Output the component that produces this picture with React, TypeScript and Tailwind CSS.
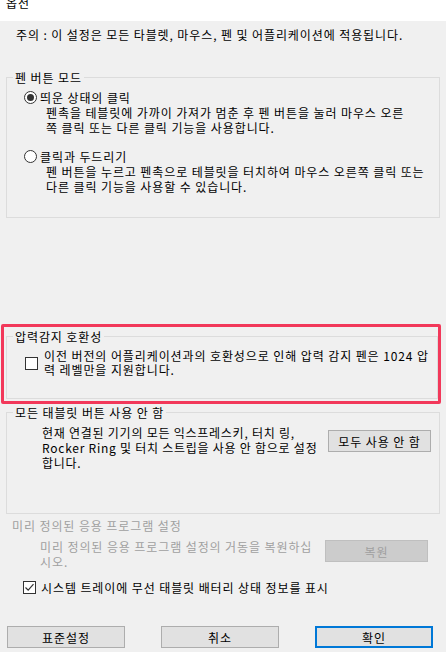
import React from "react";

function Radio({ checked }: { checked?: boolean }) {
  return (
    <span className="flex h-[13px] w-[13px] shrink-0 items-center justify-center rounded-full border border-[#333333] bg-white">
      {checked && <span className="h-[7px] w-[7px] rounded-full bg-[#333333]" />}
    </span>
  );
}

function Check({ checked }: { checked?: boolean }) {
  return (
    <span className="flex h-[13px] w-[13px] shrink-0 items-center justify-center border border-[#333333] bg-white">
      {checked && (
        <svg width="11" height="11" viewBox="0 0 11 11">
          <path d="M1.5 5.5 L4.2 8.2 L9.5 2.2" fill="none" stroke="#333333" strokeWidth="1.2" />
        </svg>
      )}
    </span>
  );
}

function Button({ label, className = "", disabled, primary }: { label: string; className?: string; disabled?: boolean; primary?: boolean }) {
  const tone = disabled
    ? "border border-[#bfbfbf] bg-[#cccccc] text-[#a0a0a0]"
    : primary
      ? "border-2 border-[#0078d7] bg-[#e1e1e1] text-black"
      : "border border-[#adadad] bg-[#e1e1e1] text-black";
  return (
    <button type="button" className={`flex h-[22px] shrink-0 items-center justify-center ${tone} ${className}`}>
      {label}
    </button>
  );
}

export default function App() {
  return (
    <div className="h-[652px] w-[446px] overflow-hidden whitespace-nowrap bg-[#f0f0f0] font-['Noto_Sans_CJK_KR','Noto_Sans',sans-serif] text-[12px] leading-[15px] tracking-[0.9px] text-black">
      <div className="h-[21px] overflow-hidden bg-white px-[6px]">
        <div className="-mt-[5px]">옵션</div>
      </div>

      <p className="mt-[6px] pl-[16px]">주의 : 이 설정은 모든 타블렛, 마우스, 펜 및 어플리케이션에 적용됩니다.</p>

      <fieldset className="mx-[6px] mt-[28px] h-[148px] border border-[#dcdcdc]">
        <legend className="ml-[6px] px-[2px]">펜 버튼 모드</legend>
        <div className="mt-[5px] pl-[17px]">
          <div className="flex items-center gap-[3px]">
            <Radio checked />
            <span>띄운 상태의 클릭</span>
          </div>
          <p className="pl-[22px]">
            펜촉을 테블릿에 가까이 가져가 멈춘 후 펜 버튼을 눌러 마우스 오른
            <br />
            쪽 클릭 또는 다른 클릭 기능을 사용합니다.
          </p>
          <div className="mt-[14px] flex items-center gap-[3px]">
            <Radio />
            <span>클릭과 두드리기</span>
          </div>
          <p className="pl-[22px]">
            펜 버튼을 누르고 펜촉으로 테블릿을 터치하여 마우스 오른쪽 클릭 또는
            <br />
            다른 클릭 기능을 사용할 수 있습니다.
          </p>
        </div>
      </fieldset>

      <div className="ml-[1px] mt-[106px] h-[80px] w-[440px] overflow-hidden rounded-[2px] border-[3px] border-[#f2385a]">
        <fieldset className="ml-[2px] mt-[2px] h-[70px] border border-[#dcdcdc]">
          <legend className="ml-[6px] px-[2px]">압력감지 호환성</legend>
          <div className="mt-[5px] flex items-center gap-[6px] pl-[18px]">
            <Check />
            <p className="leading-[14px]">
              이전 버전의 어플리케이션과의 호환성으로 인해 압력 감지 펜은 1024 압
              <br />
              력 레벨만을 지원합니다.
            </p>
          </div>
        </fieldset>
      </div>

      <fieldset className="mx-[6px] mt-[1px] h-[109px] border border-[#dcdcdc]">
        <legend className="ml-[6px] px-[2px]">모든 태블릿 버튼 사용 안 함</legend>
        <div className="mt-[5px] flex items-start pl-[35px]">
          <p className="w-[286px] tracking-[0.75px]">
            현재 연결된 기기의 모든 익스프레스키, 터치 링,
            <br />
            Rocker Ring 및 터치 스트립을 사용 안 함으로 설정
            <br />
            합니다.
          </p>
          <Button label="모두 사용 안 함" className="mt-[5px] w-[103px]" />
        </div>
      </fieldset>

      <p className="mt-[4px] pl-[12px] text-[#a0a0a0]">미리 정의된 응용 프로그램 설정</p>
      <div className="mt-[6px] flex items-start pl-[40px] text-[#a0a0a0]">
        <p className="w-[285px]">
          미리 정의된 응용 프로그램 설정의 거동을 복원하십
          <br />
          시오.
        </p>
        <Button label="복원" disabled className="mt-[1px] w-[103px]" />
      </div>

      <div className="mt-[11px] flex items-center gap-[5px] pl-[23px]">
        <Check checked />
        <span>시스템 트레이에 무선 태블릿 배터리 상태 정보를 표시</span>
      </div>

      <div className="mt-[31px] flex gap-[36px] pl-[7px]">
        <Button label="표준설정" className="w-[118px]" />
        <Button label="취소" className="w-[118px]" />
        <Button label="확인" primary className="w-[118px]" />
      </div>
    </div>
  );
}
